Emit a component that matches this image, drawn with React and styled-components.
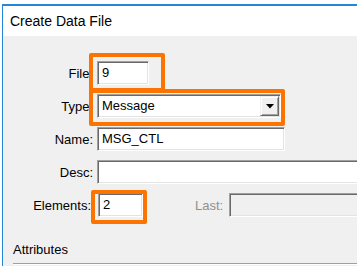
import React from 'react';
import styled, { createGlobalStyle } from 'styled-components';

const GlobalStyle = createGlobalStyle`
  html, body {
    margin: 0;
    padding: 0;
    background: #fff;
  }
  body {
    font-family: "Liberation Sans", Arial, sans-serif;
    overflow: hidden;
  }
`;

const Window = styled.div`
  margin: 4px 0 0 2px;
  width: 355px;
  height: 262px;
  border-top: 2px solid #2486d9;
  border-left: 1px solid #2486d9;
  box-sizing: border-box;
  display: flex;
  flex-direction: column;
  overflow: hidden;
`;

const TitleBar = styled.div`
  height: 30px;
  line-height: 30px;
  background: #fff;
  padding-left: 7px;
  font-size: 14px;
  color: #000;
  flex-shrink: 0;
`;

const Body = styled.div`
  flex: 1;
  background: #f0f0f0;
  padding-top: 25px;
  display: flex;
  flex-direction: column;
`;

const Form = styled.div`
  display: flex;
  flex-direction: column;
  gap: 9px;
`;

const Row = styled.div`
  display: flex;
  align-items: center;
  height: 24px;
`;

const Label = styled.div`
  width: ${(p) => p.$w || 90}px;
  margin-right: ${(p) => p.$gap || 4}px;
  text-align: right;
  font-size: 13px;
  color: ${(p) => (p.$disabled ? '#8f8f8f' : '#000')};
  white-space: nowrap;
  flex-shrink: 0;
`;

const InlineLabel = styled(Label)`
  width: auto;
  margin: 0 6px 0 52px;
`;

const Field = styled.div`
  position: relative;
  box-sizing: border-box;
  height: 24px;
  width: ${(p) => (p.$width ? `${p.$width}px` : 'auto')};
  flex: ${(p) => (p.$grow ? '1' : 'none')};
  margin-right: ${(p) => (p.$grow ? '-6px' : '0')};
  background: ${(p) => (p.$disabled ? '#f0f0f0' : '#fff')};
  border: 1px solid;
  border-color: #a0a0a0 #fff #fff #a0a0a0;
  box-shadow: inset 1px 1px 0 #696969, inset -1px -1px 0 #e3e3e3;
  padding: 0 4px;
  font-size: 13px;
  line-height: 22px;
  color: #000;
  display: flex;
  align-items: center;
`;

const FieldText = styled.span`
  flex: 1;
`;

const DropButton = styled.div`
  box-sizing: border-box;
  width: 19px;
  height: 20px;
  margin-right: -3px;
  background: #f0f0f0;
  border: 1px solid;
  border-color: #f0f0f0 #696969 #696969 #f0f0f0;
  box-shadow: inset 1px 1px 0 #fff, inset -1px -1px 0 #a0a0a0;
  display: flex;
  align-items: center;
  justify-content: center;
`;

const Highlight = styled.div`
  position: relative;
  flex: none;
  &::after {
    content: '';
    position: absolute;
    top: ${(p) => p.$t}px;
    left: ${(p) => p.$l}px;
    right: ${(p) => p.$r}px;
    bottom: ${(p) => p.$b}px;
    border: 4px solid #fb7300;
    border-radius: 2px;
    pointer-events: none;
  }
`;

const Section = styled.div`
  margin: 25px 0 0 10px;
  font-size: 13px;
  color: #000;
`;

const GroupLine = styled.div`
  margin: 6px 0 0 10px;
  border-top: 1px solid #a0a0a0;
  border-bottom: 1px solid #fff;
`;

const DownArrow = () => (
  <svg width="8" height="5" viewBox="0 0 8 5">
    <path d="M0 0 H8 L4 4.5 Z" fill="#000" />
  </svg>
);

export default function App() {
  return (
    <>
      <GlobalStyle />
      <Window>
        <TitleBar>Create Data File</TitleBar>
        <Body>
          <Form>
            <Row>
              <Label>File:</Label>
              <Highlight $t={-8} $l={-8} $r={-16} $b={-7}>
                <Field $width={52}><FieldText>9</FieldText></Field>
              </Highlight>
            </Row>
            <Row>
              <Label>Type:</Label>
              <Highlight $t={-5} $l={-8} $r={-4} $b={-8}>
                <Field $width={184}>
                  <FieldText>Message</FieldText>
                  <DropButton><DownArrow /></DropButton>
                </Field>
              </Highlight>
            </Row>
            <Row>
              <Label>Name:</Label>
              <Field $width={188}><FieldText>MSG_CTL</FieldText></Field>
            </Row>
            <Row>
              <Label>Desc:</Label>
              <Field $grow />
            </Row>
            <Row>
              <Label $w={88} $gap={7}>Elements:</Label>
              <Highlight $t={-3} $l={-7} $r={-4} $b={-7}>
                <Field $width={45}><FieldText>2</FieldText></Field>
              </Highlight>
              <InlineLabel $disabled>Last:</InlineLabel>
              <Field $grow $disabled />
            </Row>
          </Form>
          <Section>Attributes</Section>
          <GroupLine />
        </Body>
      </Window>
    </>
  );
}
